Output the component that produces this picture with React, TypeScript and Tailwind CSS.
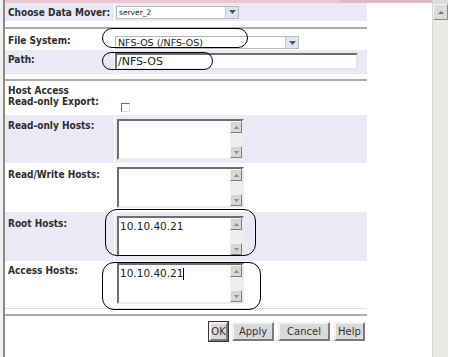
import React from "react";

const LAV = "bg-[#ebe9f5]";

function Select({ text, width, size }: { text: string; width: string; size: string }) {
  return (
    <div className={`${width} h-[13px] flex border border-[#b4b9c2] bg-white`}>
      <span className={`flex-1 pl-[2px] leading-[11px] text-[#222] whitespace-nowrap ${size}`}>{text}</span>
      <div className="w-[13px] h-full bg-[#dfe6f1] border-l border-[#c6cfdc] flex items-center justify-center">
        <svg width="7" height="4" viewBox="0 0 7 4">
          <path d="M0 0h7L3.5 4z" fill="#4b5563" />
        </svg>
      </div>
    </div>
  );
}

function Arrow({ up }: { up?: boolean }) {
  return (
    <div className="w-[12px] h-[12px] bg-[#d8d7d3] border border-t-[#f4f4f4] border-l-[#f4f4f4] border-b-[#7d7d7d] border-r-[#7d7d7d] flex items-center justify-center">
      <svg width="5" height="3" viewBox="0 0 5 3">
        <path d={up ? "M0 3h5L2.5 0z" : "M0 0h5L2.5 3z"} fill="#8a8a8a" />
      </svg>
    </div>
  );
}

function Area({ value, caret }: { value?: string; caret?: boolean }) {
  return (
    <div className="w-[127px] h-[41px] flex bg-white border-2 border-t-[#6e6e6e] border-l-[#6e6e6e] border-b-[#ececec] border-r-[#ececec]">
      <div className="flex-1 pl-[1px] pt-[2px] text-[10.5px] leading-[13px] text-[#222]">
        {value}
        {caret && <span className="inline-block w-px h-[12px] bg-black align-middle" />}
      </div>
      <div className="w-[12px] flex flex-col justify-between bg-[#efeeec]">
        <Arrow up />
        <Arrow />
      </div>
    </div>
  );
}

function Label({ children, className = "" }: { children: React.ReactNode; className?: string }) {
  return (
    <div
      className={`w-[109px] pl-[3px] font-bold text-[10px] whitespace-nowrap [font-stretch:condensed] font-['DejaVu_Sans_Condensed','DejaVu_Sans',sans-serif] text-[#2d2d2d] ${className}`}
    >
      {children}
    </div>
  );
}

function Btn({ label, width, focus }: { label: string; width: string; focus?: boolean }) {
  return (
    <div
      className={`${width} h-[19px] ${focus ? "outline outline-1 outline-[#333]" : ""} bg-[#d9d9d9] border-2 border-t-[#f2f2f2] border-l-[#f2f2f2] border-b-[#7a7a7a] border-r-[#7a7a7a] flex items-center justify-center text-[10px] text-[#333] whitespace-nowrap`}
    >
      {label}
    </div>
  );
}

function Oval({ cls }: { cls: string }) {
  return <div className={`absolute border border-black rounded-[12px] ${cls}`} />;
}

export default function App() {
  return (
    <div className="relative w-[450px] h-[357px] bg-white flex overflow-hidden font-['DejaVu_Sans',sans-serif]">
      <div className="w-[3px] bg-[#f1f1f1]" />
      <div className="w-[2px] bg-[#8a8a8a]" />
      <div className="w-[427px] flex flex-col">
        <div className="h-[3px] flex">
          <div className="w-[335px] bg-[#efc6cf]" />
          <div className="flex-1 bg-[#e8b3c3]" />
        </div>
        <div className="w-[362px] flex flex-col">
          {/* choose data mover */}
          <div className="h-[18px] flex gap-px">
            <Label className={`${LAV} flex items-center`}>Choose Data Mover:</Label>
            <div className={`flex-1 ${LAV} flex items-center pl-px`}>
              <Select text="server_2" width="w-[123px]" size="text-[7.5px]" />
            </div>
          </div>
          <div className="h-[6px]" />
          <div className="h-[2px] bg-[#acacac]" />

          {/* file system */}
          <div className="h-[21px] flex gap-px">
            <Label className="flex items-center pt-px">File System:</Label>
            <div className="flex-1 flex items-end pb-px">
              <Select text="NFS-OS (/NFS-OS)" width="w-[184px]" size="text-[9.5px]" />
            </div>
          </div>
          <div className="h-[24px] flex gap-px">
            <Label className={`${LAV} pt-[2px]`}>Path:</Label>
            <div className={`flex-1 ${LAV} pt-[3px]`}>
              <div className="w-[243px] h-[17px] bg-white border-2 border-t-[#6e6e6e] border-l-[#6e6e6e] border-b-[#e6e6e6] border-r-[#e6e6e6] text-[11px] leading-[13px] pl-px text-[#222]">
                /NFS-OS
              </div>
            </div>
          </div>
          <div className="h-[5px]" />
          <div className="h-[2px] bg-[#acacac]" />

          {/* host access */}
          <div className="h-[34px] flex gap-px">
            <Label className="pt-[4px] leading-[11px]">
              <div>Host Access</div>
              <div>Read-only Export:</div>
            </Label>
            <div className="flex-1 pl-[6px] pt-[22px]">
              <div className="w-[9px] h-[9px] bg-white border border-t-[#6e6e6e] border-l-[#6e6e6e] border-b-[#dcdcdc] border-r-[#dcdcdc]" />
            </div>
          </div>

          <div className="h-[48px] flex gap-px">
            <Label className={`${LAV} pt-[3px]`}>Read-only Hosts:</Label>
            <div className={`flex-1 ${LAV} pt-[4px] pl-[2px]`}>
              <Area />
            </div>
          </div>
          <div className="h-[49px] flex gap-px">
            <Label className="pt-[4px]">Read/Write Hosts:</Label>
            <div className="flex-1 pt-[4px] pl-[2px]">
              <Area />
            </div>
          </div>
          <div className="h-[49px] flex gap-px">
            <Label className={`${LAV} pt-[4px]`}>Root Hosts:</Label>
            <div className={`flex-1 ${LAV} pt-[4px] pl-[2px]`}>
              <Area value="10.10.40.21" />
            </div>
          </div>
          <div className="h-[48px] flex gap-px border-b border-[#dedede]">
            <Label className="pt-[2px]">Access Hosts:</Label>
            <div className="flex-1 pt-[2px] pl-[2px]">
              <Area value="10.10.40.21" caret />
            </div>
          </div>
          <div className="h-[5px]" />
          <div className="h-[2px] bg-[#acacac]" />

          <div className="flex justify-end gap-[4px] pt-[6px] pr-[2px]">
            <Btn label="OK" width="w-[19px]" focus />
            <Btn label="Apply" width="w-[42px]" />
            <Btn label="Cancel" width="w-[52px]" />
            <Btn label="Help" width="w-[31px]" />
          </div>
        </div>
      </div>
      <div className="w-[16px] flex flex-col bg-[#ebeae6] border-l border-[#d6d6d6]">
        <div className="h-[4px] bg-[#dcdcdc]" />
        <div className="h-[16px] bg-[#dcdbd7] border border-t-[#f6f6f6] border-l-[#f6f6f6] border-b-[#8a8a8a] border-r-[#8a8a8a] flex items-center justify-center">
          <svg width="6" height="3" viewBox="0 0 6 3">
            <path d="M0 3h6L3 0z" fill="#777" />
          </svg>
        </div>
      </div>

      <Oval cls="left-[102px] top-[28px] w-[146px] h-[20px]" />
      <Oval cls="left-[102px] top-[52px] w-[111px] h-[18px]" />
      <Oval cls="left-[105px] top-[209px] w-[151px] h-[47px]" />
      <Oval cls="left-[102px] top-[262px] w-[159px] h-[48px]" />
    </div>
  );
}
